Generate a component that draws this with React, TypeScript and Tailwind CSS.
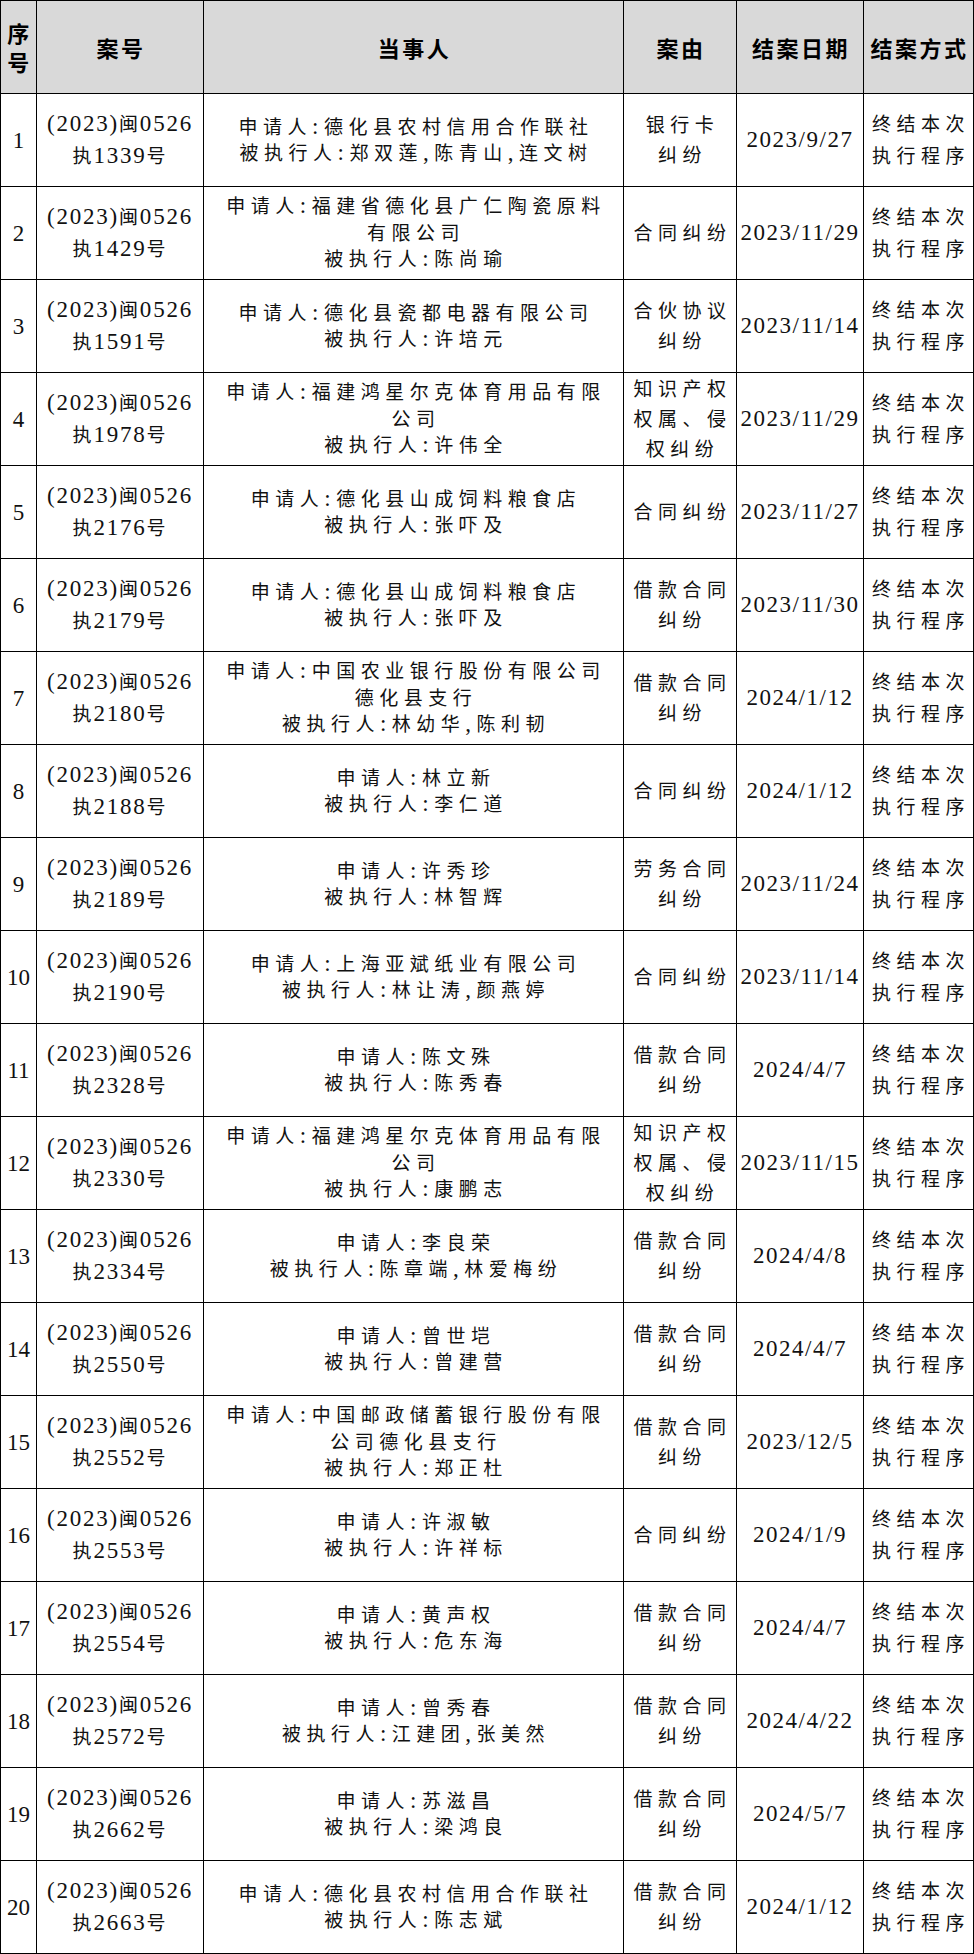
import React from "react";

type Row = {
  no: number;
  code: string;
  party: string[];
  reason: string[];
  date: string;
};

const rows: Row[] = [
  { no: 1, code: "1339", party: ["申请人:德化县农村信用合作联社", "被执行人:郑双莲,陈青山,连文树"], reason: ["银行卡", "纠纷"], date: "2023/9/27" },
  { no: 2, code: "1429", party: ["申请人:福建省德化县广仁陶瓷原料", "有限公司", "被执行人:陈尚瑜"], reason: ["合同纠纷"], date: "2023/11/29" },
  { no: 3, code: "1591", party: ["申请人:德化县瓷都电器有限公司", "被执行人:许培元"], reason: ["合伙协议", "纠纷"], date: "2023/11/14" },
  { no: 4, code: "1978", party: ["申请人:福建鸿星尔克体育用品有限", "公司", "被执行人:许伟全"], reason: ["知识产权", "权属、侵", "权纠纷"], date: "2023/11/29" },
  { no: 5, code: "2176", party: ["申请人:德化县山成饲料粮食店", "被执行人:张吓及"], reason: ["合同纠纷"], date: "2023/11/27" },
  { no: 6, code: "2179", party: ["申请人:德化县山成饲料粮食店", "被执行人:张吓及"], reason: ["借款合同", "纠纷"], date: "2023/11/30" },
  { no: 7, code: "2180", party: ["申请人:中国农业银行股份有限公司", "德化县支行", "被执行人:林幼华,陈利韧"], reason: ["借款合同", "纠纷"], date: "2024/1/12" },
  { no: 8, code: "2188", party: ["申请人:林立新", "被执行人:李仁道"], reason: ["合同纠纷"], date: "2024/1/12" },
  { no: 9, code: "2189", party: ["申请人:许秀珍", "被执行人:林智辉"], reason: ["劳务合同", "纠纷"], date: "2023/11/24" },
  { no: 10, code: "2190", party: ["申请人:上海亚斌纸业有限公司", "被执行人:林让涛,颜燕婷"], reason: ["合同纠纷"], date: "2023/11/14" },
  { no: 11, code: "2328", party: ["申请人:陈文殊", "被执行人:陈秀春"], reason: ["借款合同", "纠纷"], date: "2024/4/7" },
  { no: 12, code: "2330", party: ["申请人:福建鸿星尔克体育用品有限", "公司", "被执行人:康鹏志"], reason: ["知识产权", "权属、侵", "权纠纷"], date: "2023/11/15" },
  { no: 13, code: "2334", party: ["申请人:李良荣", "被执行人:陈章端,林爱梅纷"], reason: ["借款合同", "纠纷"], date: "2024/4/8" },
  { no: 14, code: "2550", party: ["申请人:曾世垲", "被执行人:曾建营"], reason: ["借款合同", "纠纷"], date: "2024/4/7" },
  { no: 15, code: "2552", party: ["申请人:中国邮政储蓄银行股份有限", "公司德化县支行", "被执行人:郑正杜"], reason: ["借款合同", "纠纷"], date: "2023/12/5" },
  { no: 16, code: "2553", party: ["申请人:许淑敏", "被执行人:许祥标"], reason: ["合同纠纷"], date: "2024/1/9" },
  { no: 17, code: "2554", party: ["申请人:黄声权", "被执行人:危东海"], reason: ["借款合同", "纠纷"], date: "2024/4/7" },
  { no: 18, code: "2572", party: ["申请人:曾秀春", "被执行人:江建团,张美然"], reason: ["借款合同", "纠纷"], date: "2024/4/22" },
  { no: 19, code: "2662", party: ["申请人:苏滋昌", "被执行人:梁鸿良"], reason: ["借款合同", "纠纷"], date: "2024/5/7" },
  { no: 20, code: "2663", party: ["申请人:德化县农村信用合作联社", "被执行人:陈志斌"], reason: ["借款合同", "纠纷"], date: "2024/1/12" },
];

function Mixed({ text }: { text: string }) {
  const parts = text.split(/([\x00-\x7F]+)/).filter((p) => p.length > 0);
  return (
    <>
      {parts.map((p, i) =>
        /^[\x00-\x7F]+$/.test(p) ? (
          <span key={i} className="font-['Liberation_Serif',serif] font-normal text-[23px]">
            {p}
          </span>
        ) : (
          <span key={i} className="font-['Noto_Sans_CJK_SC',sans-serif] font-normal text-[19px]">
            {p}
          </span>
        )
      )}
    </>
  );
}

function Lines({ lines }: { lines: string[] }) {
  return (
    <div className="flex flex-col items-center">
      {lines.map((l, i) => (
        <div key={i} className="whitespace-nowrap">
          <Mixed text={l} />
        </div>
      ))}
    </div>
  );
}

const cell = "bg-white flex items-center justify-center text-center text-[#111111]";
const head = "bg-[#d9d9d9] flex items-center justify-center text-center text-black font-['Noto_Sans_CJK_SC',sans-serif] font-bold text-[22px] leading-[29px] tracking-[2.5px]";

export default function App() {
  return (
    <div className="w-[974px] h-[1954px] bg-black p-px">
      <div className="grid grid-cols-[35px_166px_419px_112px_126px_109px] auto-rows-[92px] gap-px">
        <div className={head + " px-[6px] pl-[8px]"}>序号</div>
        <div className={head + " pl-[2px]"}>案号</div>
        <div className={head + " pl-[2px]"}>当事人</div>
        <div className={head + " pl-[2px]"}>案由</div>
        <div className={head + " pl-[2px]"}>结案日期</div>
        <div className={head + " pl-[2px]"}>结案方式</div>
        {rows.map((r) => (
          <React.Fragment key={r.no}>
            <div className={cell + " leading-[29px]"}>
              <Mixed text={String(r.no)} />
            </div>
            <div className={cell + " leading-[29px] tracking-[1.8px]"}>
              <Lines lines={["(2023)闽0526", "执" + r.code + "号"]} />
            </div>
            <div className={cell + " leading-[24.5px] tracking-[5.5px] pl-[5px]"}>
              <Lines lines={r.party} />
            </div>
            <div className={cell + " leading-[28px] tracking-[5.5px] pl-[5px]"}>
              <Lines lines={r.reason} />
            </div>
            <div className={cell + " leading-[29px] tracking-[1.5px]"}>
              <Lines lines={[r.date]} />
            </div>
            <div className={cell + " leading-[29px] tracking-[5.5px] pl-[5px]"}>
              <Lines lines={["终结本次", "执行程序"]} />
            </div>
          </React.Fragment>
        ))}
      </div>
    </div>
  );
}
